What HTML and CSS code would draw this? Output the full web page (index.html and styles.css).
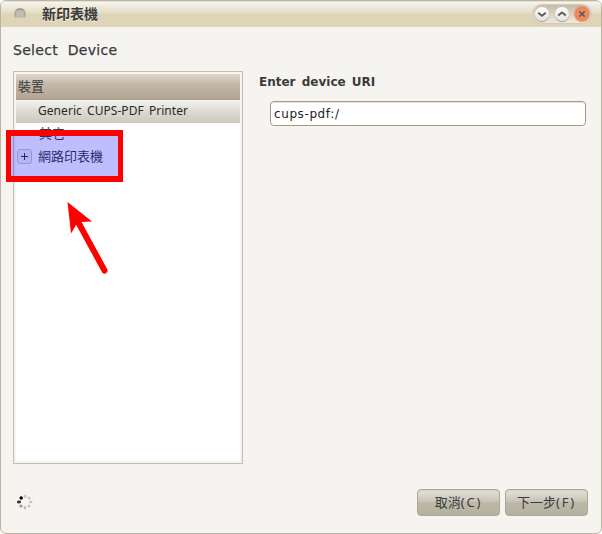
FILE: index.html
```html
<!DOCTYPE html>
<html lang="zh-Hant">
<head>
<meta charset="utf-8">
<title>新印表機</title>
<link rel="stylesheet" href="styles.css">
</head>
<body>
<main class="window">
  <header class="titlebar">
    <span class="menu-dot"></span>
    <h1 class="title">新印表機</h1>
    <div class="controls">
      <span class="control"><svg viewBox="0 0 14 14"><path d="M3.200 5.800 7 8.800 10.800 5.800"/></svg></span>
      <span class="control"><svg viewBox="0 0 14 14"><path d="M3.200 8.500 7 5.500 10.800 8.500"/></svg></span>
      <span class="control close"><svg viewBox="0 0 14 14"><path d="M4.300 4.300 9.700 9.700M9.700 4.300 4.300 9.700"/></svg></span>
    </div>
  </header>
  <h2 class="heading"><span class="t-heading">Select Device</span></h2>
  <div class="content">
    <section class="tree">
      <div class="tree-head">裝置</div>
      <div class="row selected"><span class="t-row">Generic CUPS-PDF Printer</span></div>
      <div class="row other">其它</div>
      <div class="row network"><span class="expander"></span>網路印表機</div>
    </section>
    <section class="uri">
      <h3 class="label"><span class="t-label">Enter device URI</span></h3>
      <div class="field"><span class="t-field">cups-pdf:/</span></div>
    </section>
  </div>
  <footer class="footer">
    <svg class="spinner" viewBox="0 0 16 16">
      <g fill="#c6c5c1"><ellipse cx="8" cy="2.300" rx="1.300" ry="1.800"/><circle cx="12" cy="4" r="1.500"/><ellipse cx="13.700" cy="8" rx="1.800" ry="1.300"/><circle cx="12" cy="12" r="1.500"/></g>
      <ellipse cx="8" cy="13.700" rx="1.300" ry="1.800" fill="#bdbcb8"/>
      <circle cx="4" cy="12" r="1.600" fill="#9b9a96"/>
      <ellipse cx="2" cy="8" rx="2.100" ry="1.400" fill="#333"/>
      <circle cx="4.200" cy="4" r="1.700" fill="#000"/>
    </svg>
    <div class="button">取消<span class="key">(C)</span></div>
    <div class="button">下一步<span class="key">(F)</span></div>
  </footer>
  <div class="highlight"></div>
  <svg class="arrow" viewBox="0 0 50 80">
    <path d="M17 20 44.500 70.500" stroke="red" stroke-width="6" stroke-linecap="round"/>
    <path d="M7.500 2 32 21.500 21.500 22 16 25 11 33.500Z" fill="red"/>
  </svg>
</main>
</body>
</html>
```
FILE: styles.css
```css
* { box-sizing: border-box; }
html { background: #fff; }
body {
  margin: 0;
  font: 13px/20px "Noto Sans", "Noto Sans CJK TC", sans-serif;
  color: #3b3b3b;
}
h1, h2, h3 { margin: 0; }
.window {
  position: relative;
  display: flex;
  flex-direction: column;
  width: 602px;
  height: 534px;
  overflow: hidden;
  border: 1px solid #beb2a0;
  border-radius: 6px;
  background: #f5f4f0;
}
.titlebar {
  display: flex;
  align-items: center;
  height: 26px;
  flex: none;
  padding: 0 10px 0 13px;
  background: linear-gradient(#d6cdbc 0, #f7f5ee 1px, #eeebdf 5px, #e4dec7 12px, #ded5b8 13px, #ded5b8 100%);
}
.menu-dot {
  width: 12px;
  height: 12px;
  border: 2px solid #aaa18d;
  border-color: #a39b89 #b5ad9a #ddd5c1;
  border-radius: 50%;
  background: #c0bdb4;
}
.title {
  flex: 1;
  margin-left: 16px;
  font-size: 14px;
  line-height: 24px;
  text-shadow: 0 1px #f5f1e5;
}
.controls {
  display: flex;
  gap: 6px;
  padding: 2px;
  height: 18px;
  border-radius: 9px;
  background: linear-gradient(#c6bba8, #eeeade);
  box-shadow: 0 0 1px 1px #d3cab5;
}
.control {
  width: 14px;
  height: 14px;
  border-radius: 50%;
  background: linear-gradient(#fff, #e3e1da);
  box-shadow: 0 1px 1px #9d9482;
}
.control svg { display: block; fill: none; stroke: #5b5b58; stroke-width: 1.8; }
.close { background: radial-gradient(#f9a07a, #f26a3b); box-shadow: 0 0 1px 1px #d9936f; }
.heading {
  height: 44px;
  flex: none;
  padding: 12px 0 0 12px;
  font-size: 15px;
  font-weight: 500;
}
.t-heading, .t-row, .t-label, .t-field { display: inline-block; white-space: nowrap; }
.t-heading {
  font-family: "DejaVu Sans", sans-serif;
  font-size: 14px;
  word-spacing: 5px;
  letter-spacing: .3px;
  -webkit-text-stroke: .25px #3b3b3b;
}
.content { display: flex; height: 393px; padding-left: 12px; flex: none; }
.tree {
  width: 230px;
  height: 393px;
  padding: 2px;
  border: 1px solid #c6bfb0;
  background: #fefefe;
  box-shadow: inset 0 0 0 2px #f5f4f0;
}
.tree-head {
  height: 26px;
  padding: 2px 2px;
  border-bottom: 1px solid #aa9d89;
  background: linear-gradient(#e0d8cd, #c4b8a9 40%, #b2a593);
}
.row { height: 23px; padding-left: 23px; line-height: 20px; }
.selected { padding-left: 22px; color: #292929; background: linear-gradient(#f5f5f1, #dedcd3 45%, #ccc9be); }
.t-row { font-size: 12px; letter-spacing: .05px; word-spacing: 2px; }
.other { line-height: 21px; }
.network { display: flex; padding-left: 2px; }
.expander {
  width: 15px;
  height: 15px;
  margin: 3px 6px 0 -1px;
  border: 1px solid #ccc8c8;
  border-radius: 3px;
  background: linear-gradient(#333, #333) center / 7px 1px no-repeat, linear-gradient(#333, #333) center / 1px 7px no-repeat, #f1f0ed;
}
.uri { flex: 1; padding: 1px 15px 0 16px; }
.label { height: 29px; font-size: 12px; }
.t-label { font-family: "DejaVu Sans", sans-serif; word-spacing: 2px; }
.field {
  height: 25px;
  margin-left: 11px;
  padding: 0 3px;
  border: 1px solid #a99983;
  border-radius: 4px;
  background: #fff;
  color: #222;
  line-height: 23px;
  box-shadow: inset 0 1px #e7e4df;
}
.t-field { font-family: "DejaVu Sans", sans-serif; font-size: 12px; letter-spacing: .6px; }
.footer {
  display: flex;
  flex: 1;
  align-items: flex-start;
  gap: 5px;
  padding: 25px 13px 0 15px;
}
.spinner { width: 16px; height: 16px; margin: 5px auto 0 1px; }
.button {
  width: 83px;
  height: 27px;
  border: 1px solid #aaa797;
  border-radius: 4px;
  background: linear-gradient(#e3e1d9, #c8c5b8 45%, #bdb9a9 50%, #b5b09e);
  box-shadow: inset 0 1px #d5d3c8;
  line-height: 25px;
  text-align: center;
}
.key { letter-spacing: 1.8px; }
.highlight {
  position: absolute;
  left: 5px;
  top: 129px;
  width: 117px;
  height: 52px;
  border: 6px solid red;
  border-width: 6px 5px 6px 5px;
  background: rgba(0, 0, 255, .25);
}
.arrow {
  position: absolute;
  left: 59px;
  top: 199px;
  width: 50px;
  height: 80px;
  fill: none;
}
```
